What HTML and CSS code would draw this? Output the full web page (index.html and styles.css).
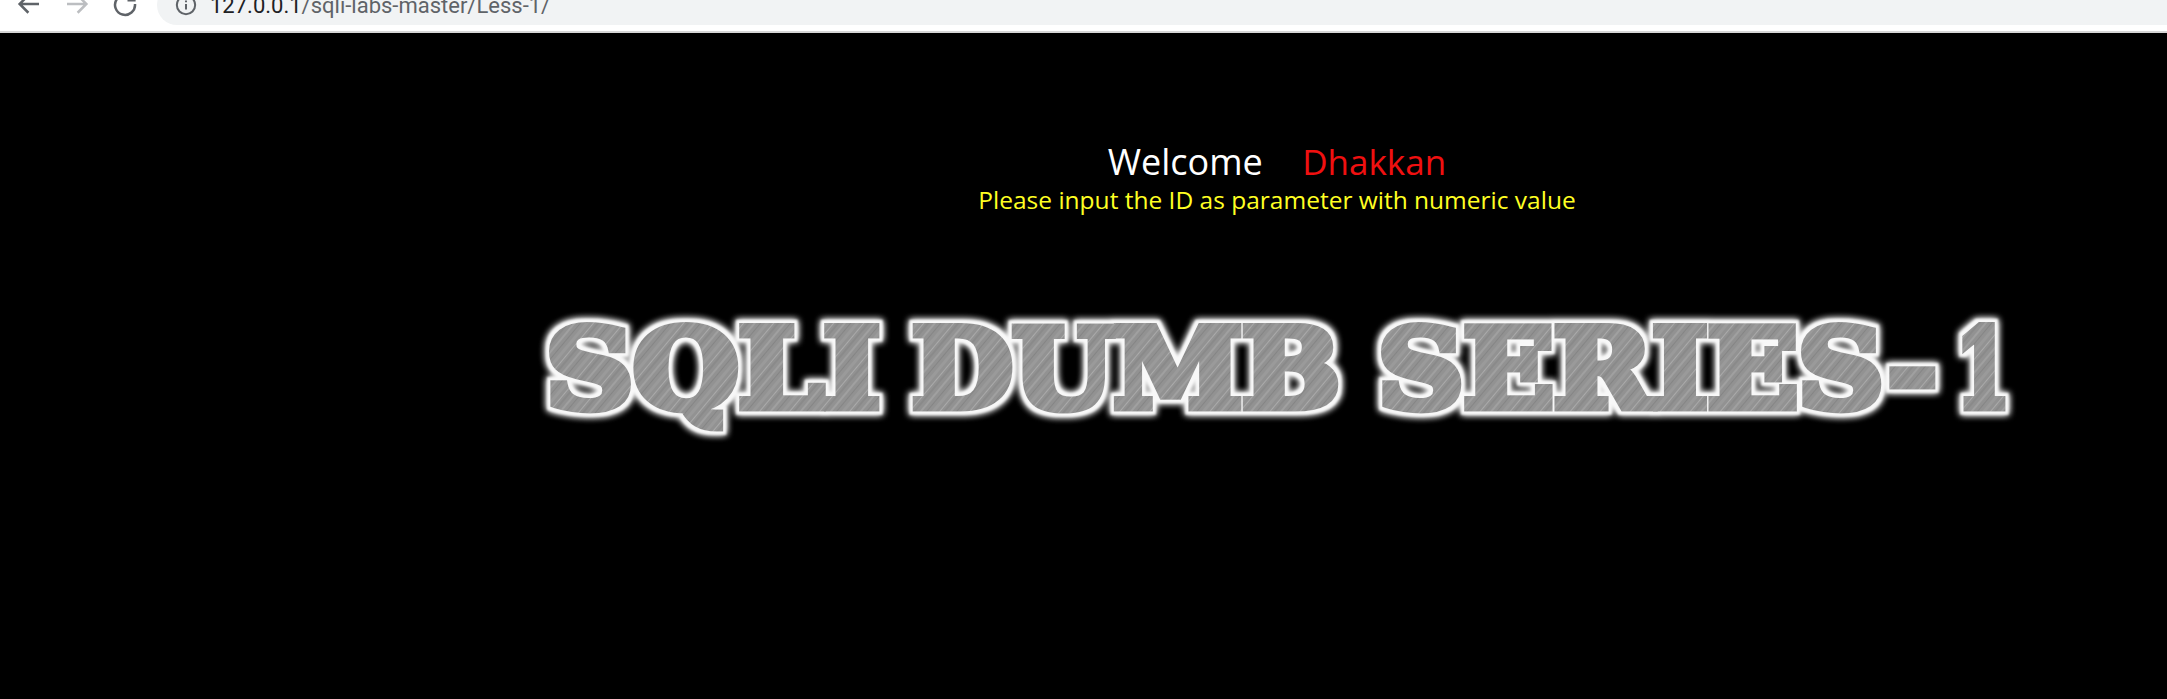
FILE: index.html
```html
<!DOCTYPE html>
<html lang="en">
<head>
  <meta charset="UTF-8">
  <title>Less-1 **Error Based- String**</title>
  <link rel="stylesheet" href="styles.css">
</head>
<body>
  <div class="toolbar">
    <svg class="nav-icon" viewBox="0 0 24 24"><path d="M20 12H5M11.5 5l-7 7 7 7" /></svg>
    <svg class="nav-icon disabled" viewBox="0 0 24 24"><path d="M4 12h15M12.5 5l7 7-7 7" /></svg>
    <svg class="nav-icon" viewBox="0 0 24 24"><path d="M18.5 8A8 8 0 1 0 20 12M19.5 3.5V9H14" /></svg>
    <div class="omnibox">
      <svg class="info-icon" viewBox="0 0 24 24"><circle cx="12" cy="12" r="10" /><path d="M12 11v6M12 7v2" /></svg>
      <span class="url"><span class="host">127.0.0.1</span>/sqli-labs-master/Less-1/</span>
    </div>
  </div>
  <div class="page">
    <div class="welcome">Welcome <span class="name">Dhakkan</span></div>
    <div class="hint">Please input the ID as parameter with numeric value</div>
    <svg class="title" viewBox="0 0 1560 150" width="1560" height="150">
      <defs>
        <pattern id="brushed" width="23" height="23" patternUnits="userSpaceOnUse" patternTransform="rotate(40)">
          <rect width="23" height="23" fill="#929292" />
          <rect x="2" width="2" height="23" fill="#a0a0a0" />
          <rect x="7" width="1" height="23" fill="#858585" />
          <rect x="11" width="3" height="23" fill="#9a9a9a" />
          <rect x="17" width="1" height="23" fill="#aaaaaa" />
          <rect x="20" width="2" height="23" fill="#8a8a8a" />
        </pattern>
        <filter id="halo" x="-5%" y="-30%" width="110%" height="160%">
          <feMorphology in="SourceAlpha" operator="dilate" radius="3" result="fat" />
          <feFlood flood-color="#f8f8f8" />
          <feComposite in2="fat" operator="in" result="edge" />
          <feGaussianBlur in="edge" stdDeviation="1.2" result="edgeSoft" />
          <feGaussianBlur in="edge" stdDeviation="3.5" result="glow" />
          <feGaussianBlur in="SourceGraphic" stdDeviation="0.6" result="body" />
          <feMerge>
            <feMergeNode in="glow" />
            <feMergeNode in="glow" />
            <feMergeNode in="edgeSoft" />
            <feMergeNode in="body" />
          </feMerge>
        </filter>
      </defs>
      <g class="title-text">
        <text x="46" y="107" textLength="334" lengthAdjust="spacingAndGlyphs">SQLI</text>
        <text x="412" y="107" textLength="428" lengthAdjust="spacingAndGlyphs">DUMB</text>
        <text x="878" y="107" textLength="559" lengthAdjust="spacingAndGlyphs">SERIES-</text>
        <text x="1456" y="107" textLength="54" lengthAdjust="spacingAndGlyphs">1</text>
      </g>
    </svg>
  </div>
</body>
</html>
```

FILE: styles.css
```css
html, body {
  margin: 0;
  padding: 0;
  height: 100%;
  overflow: hidden;
  background: #000;
}

.toolbar {
  height: 31px;
  background: #fff;
  border-bottom: 2px solid #d6d6d6;
  display: flex;
  align-items: flex-end;
  gap: 18px;
  padding-left: 14px;
  overflow: hidden;
}

.nav-icon {
  width: 30px;
  height: 30px;
  margin-bottom: 12px;
  flex: none;
  fill: none;
  stroke: #5f6368;
  stroke-width: 2;
}

.nav-icon.disabled {
  stroke: #bcbec1;
}

.omnibox {
  flex: 1;
  height: 40px;
  margin-left: -1px;
  margin-bottom: 6px;
  background: #f1f3f4;
  border-radius: 20px 0 0 20px;
  display: flex;
  align-items: center;
  padding-left: 18px;
}

.info-icon {
  width: 22px;
  height: 22px;
  fill: none;
  stroke: #5f6368;
  stroke-width: 2.2;
  margin-right: 13px;
}

.url {
  font-family: Roboto, sans-serif;
  font-size: 22px;
  color: #5f6368;
  white-space: nowrap;
}

.host {
  color: #202124;
}

.page {
  padding-left: 387px;
  padding-top: 108px;
  text-align: center;
}

.welcome {
  font-family: "Open Sans", sans-serif;
  font-size: 36px;
  line-height: 42px;
  color: #fff;
  white-space: pre;
}

.name {
  color: #f01010;
  font-size: 35px;
  margin-left: 30px;
}

.hint {
  font-family: "Open Sans", sans-serif;
  font-size: 24.5px;
  line-height: 33px;
  color: #ffff22;
}

.title {
  display: block;
  margin-left: 113px;
  margin-top: 84px;
}

.title-text {
  font-family: "DejaVu Serif", serif;
  font-weight: bold;
  font-size: 109px;
  fill: url(#brushed);
  stroke: url(#brushed);
  stroke-width: 9px;
  stroke-linejoin: miter;
  filter: url(#halo);
}
```
